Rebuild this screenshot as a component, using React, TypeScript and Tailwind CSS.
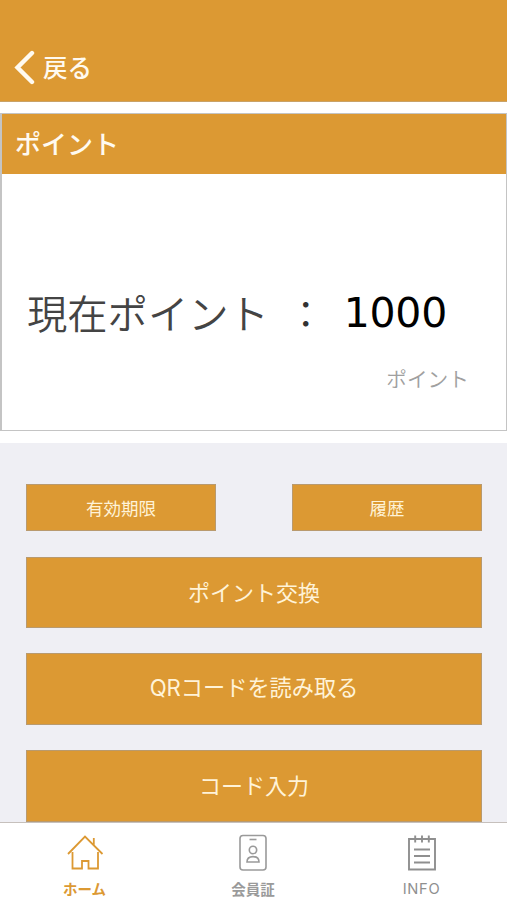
import React from "react";

const jp = "font-['Noto_Sans_CJK_JP',sans-serif]";

function Action({ label, className }: { label: string; className: string }) {
  return (
    <button
      className={`flex shrink-0 items-center justify-center border border-[#b99a6e] bg-[#dc9933] leading-none text-[#fff3d8] whitespace-nowrap ${className}`}
    >
      <span>{label}</span>
    </button>
  );
}

function Tab({ label, className, children }: { label: string; className: string; children: React.ReactNode }) {
  return (
    <div className={`flex flex-col items-center leading-[18px] ${className}`}>
      <svg width="40" height="40" viewBox="0 0 40 40" fill="none" stroke="currentColor" className="mt-[8px]">
        {children}
      </svg>
      <span className="mt-[8px]">{label}</span>
    </div>
  );
}

export default function App() {
  return (
    <div className={`flex h-[900px] w-[507px] flex-col overflow-hidden bg-white ${jp}`}>
      <header className="flex h-[102px] shrink-0 items-end border-b border-[#c9a267] bg-[#dc9933] pb-[16px] pl-[14px] text-[#fffaf0]">
        <svg width="22" height="36" viewBox="0 0 22 36" fill="none" stroke="currentColor" strokeWidth="4.4" strokeLinecap="round" strokeLinejoin="miter">
          <path d="M18 4 L3.5 18.5 L18 33" />
        </svg>
        <span className="mb-[4px] ml-[7px] text-[24.5px] leading-[28px] font-medium">戻る</span>
      </header>

      <section className="mt-[11px] flex h-[318px] shrink-0 flex-col border border-l-2 border-[#c4c4c4]">
        <h1 className="flex h-[60px] shrink-0 items-center bg-[#dc9933] pb-[2px] pl-[13px] text-[26px] leading-none font-medium text-[#fffaf0]">
          ポイント
        </h1>
        <div className="mt-[113px] flex h-[50px] items-center pl-[25px] leading-none whitespace-nowrap">
          <span className="text-[40.3px] font-[350] text-[#444]">現在ポイント</span>
          <span className="ml-[17px] w-[40px] text-center text-[38px] font-[350] text-[#333]">：</span>
          <span className="mt-[3px] ml-[18px] font-['DejaVu_Sans',sans-serif] text-[41px] tracking-[-0.3px] text-black">1000</span>
        </div>
        <p className="mt-[28px] pr-[37px] text-right text-[20.7px] leading-[26px] font-[350] text-[#a0a0a0]">ポイント</p>
      </section>

      <main className="mt-[12px] flex h-[379px] shrink-0 flex-col overflow-hidden bg-[#efeff4] px-[26px] pt-[41px] pr-[25px]">
        <div className="flex justify-between">
          <Action label="有効期限" className="h-[47px] w-[190px] text-[17.5px]" />
          <Action label="履歴" className="h-[47px] w-[190px] text-[17.5px]" />
        </div>
        <Action label="ポイント交換" className="mt-[26px] h-[71px] pb-[3px] text-[22px]" />
        <Action label="QRコードを読み取る" className="mt-[25px] h-[72px] pb-[1px] font-['Inter','Noto_Sans_CJK_JP',sans-serif] text-[22.2px]" />
        <Action label="コード入力" className="mt-[25px] h-[72px] pb-[4px] text-[22px]" />
      </main>

      <nav className="flex h-[78px] shrink-0 border-t border-[#c6c0bc] bg-white pt-px">
        <Tab label="ホーム" className="w-[169px] text-[14.5px] font-bold text-[#dc9933]">
          <g strokeWidth="1.8">
            <path d="M3 22 L20 4.5 L37.5 22" />
            <path d="M28.8 12.8 V6" />
            <path d="M7.5 20 V36.5 H17 V29 H23.5 V36.5 H33 V20" />
          </g>
        </Tab>
        <Tab label="会員証" className="w-[168px] text-[14.5px] font-bold text-[#9a9a9a]">
          <g strokeWidth="1.6">
            <rect x="7" y="3.5" width="26" height="34.5" rx="3" />
            <path d="M16.5 7.5 H23.5" />
            <circle cx="20" cy="18" r="3.7" />
            <path d="M14 30 C14 26 16.5 24.6 20 24.6 C23.5 24.6 26 26 26 30 Z" />
          </g>
        </Tab>
        <Tab label="INFO" className="w-[169px] font-['Inter',sans-serif] text-[14.7px] tracking-[0.7px] text-[#8f8f8f]">
          <g strokeWidth="1.9">
            <path d="M7 7 H33 V37.5 H7 Z" />
            <path d="M13.2 3.5 V10.5 M20 3.5 V10.5 M26.8 3.5 V10.5" />
            <path d="M12 17.5 H28 M12 24 H28 M12 30.5 H28" />
          </g>
        </Tab>
      </nav>
    </div>
  );
}
